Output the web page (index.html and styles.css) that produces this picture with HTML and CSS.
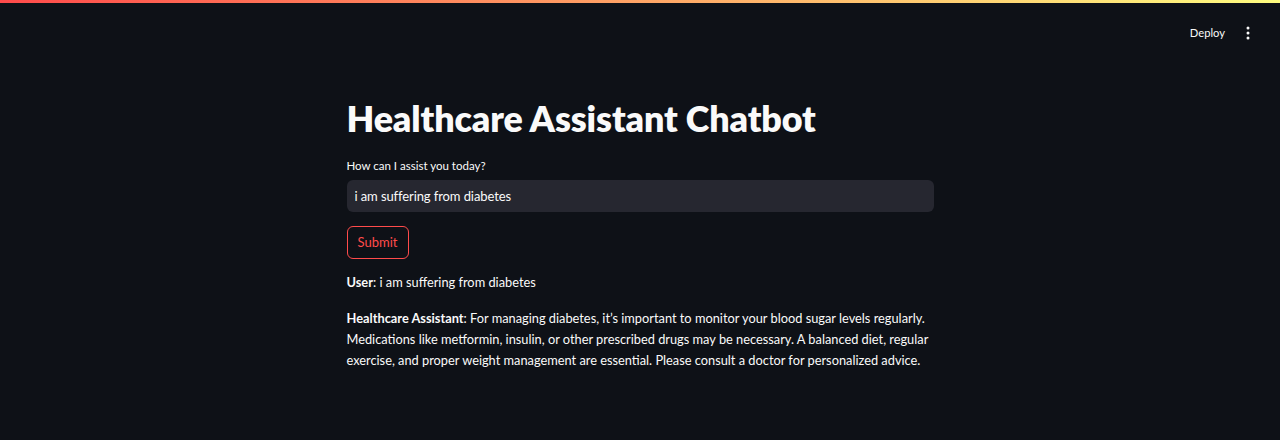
FILE: index.html
```html
<!DOCTYPE html>
<html lang="en">
<head>
<meta charset="utf-8">
<title>Healthcare Assistant Chatbot</title>
<link rel="stylesheet" href="styles.css">
</head>
<body>
<div class="decoration"></div>
<header class="topbar">
  <span class="deploy">Deploy</span>
  <span class="menu" aria-label="Main menu">
    <svg width="16" height="16" viewBox="0 0 16 16"><circle cx="8" cy="3" r="1.5" fill="#fafafa"/><circle cx="8" cy="8" r="1.5" fill="#fafafa"/><circle cx="8" cy="13" r="1.5" fill="#fafafa"/></svg>
  </span>
</header>
<main class="block">
  <h1 class="title">Healthcare Assistant Chatbot</h1>
  <label class="label" for="q">How can I assist you today?</label>
  <div class="input-wrap"><input id="q" class="input" type="text" value="i am suffering from diabetes"></div>
  <button class="btn" type="button">Submit</button>
  <p class="msg msg-user"><strong>User</strong>: i am suffering from diabetes</p>
  <p class="msg"><strong>Healthcare Assistant</strong>: For managing diabetes, it’s important to monitor your blood sugar levels regularly. Medications like metformin, insulin, or other prescribed drugs may be necessary. A balanced diet, regular exercise, and proper weight management are essential. Please consult a doctor for personalized advice.</p>
</main>
</body>
</html>
```
FILE: styles.css
```css
html, body {
  margin: 0;
  padding: 0;
  background: #0e1117;
  color: #fafafa;
  font-family: Lato, "Noto Sans", sans-serif;
  height: 100%;
  overflow: hidden;
}
.decoration {
  height: 3px;
  background: linear-gradient(90deg, #ff4b4b, #fffd80);
}
.topbar {
  height: 45px;
  box-sizing: border-box;
  padding-top: 14px;
  display: flex;
  justify-content: flex-end;
  align-items: center;
  gap: 15px;
  padding-right: 24px;
}
.deploy {
  font-size: 11.2px;
  color: #fafafa;
  font-weight: 400;
}
.menu {
  display: flex;
  align-items: center;
}
.block {
  width: 587px;
  margin: 0 auto;
  padding-top: 50px;
}
.title {
  font-size: 35.8px;
  font-weight: 800;
  line-height: 1.2;
  margin: 0 0 17px 0;
  letter-spacing: -0.1px;
}
.label {
  display: block;
  font-size: 11.5px;
  line-height: 16px;
  margin-bottom: 6px;
}
.input-wrap {
  background: #262730;
  border-radius: 6px;
  height: 32px;
  display: flex;
  align-items: center;
}
.input {
  background: transparent;
  border: none;
  outline: none;
  color: #fafafa;
  font-family: inherit;
  font-size: 13px;
  letter-spacing: -0.1px;
  padding: 0 8px;
  width: 100%;
}
.btn {
  display: block;
  margin-top: 14px;
  height: 33px;
  width: 62px;
  border: 1px solid #ff4b4b;
  border-radius: 6px;
  background: transparent;
  color: #ff4b4b;
  font-family: inherit;
  font-size: 13px;
  padding: 0;
}
.msg {
  font-size: 12.8px;
  letter-spacing: 0;
  line-height: 21px;
  margin: 15px 0 0 0;
}
.msg-user {
  margin-top: 13px;
}
.msg strong {
  font-weight: 700;
}
```
